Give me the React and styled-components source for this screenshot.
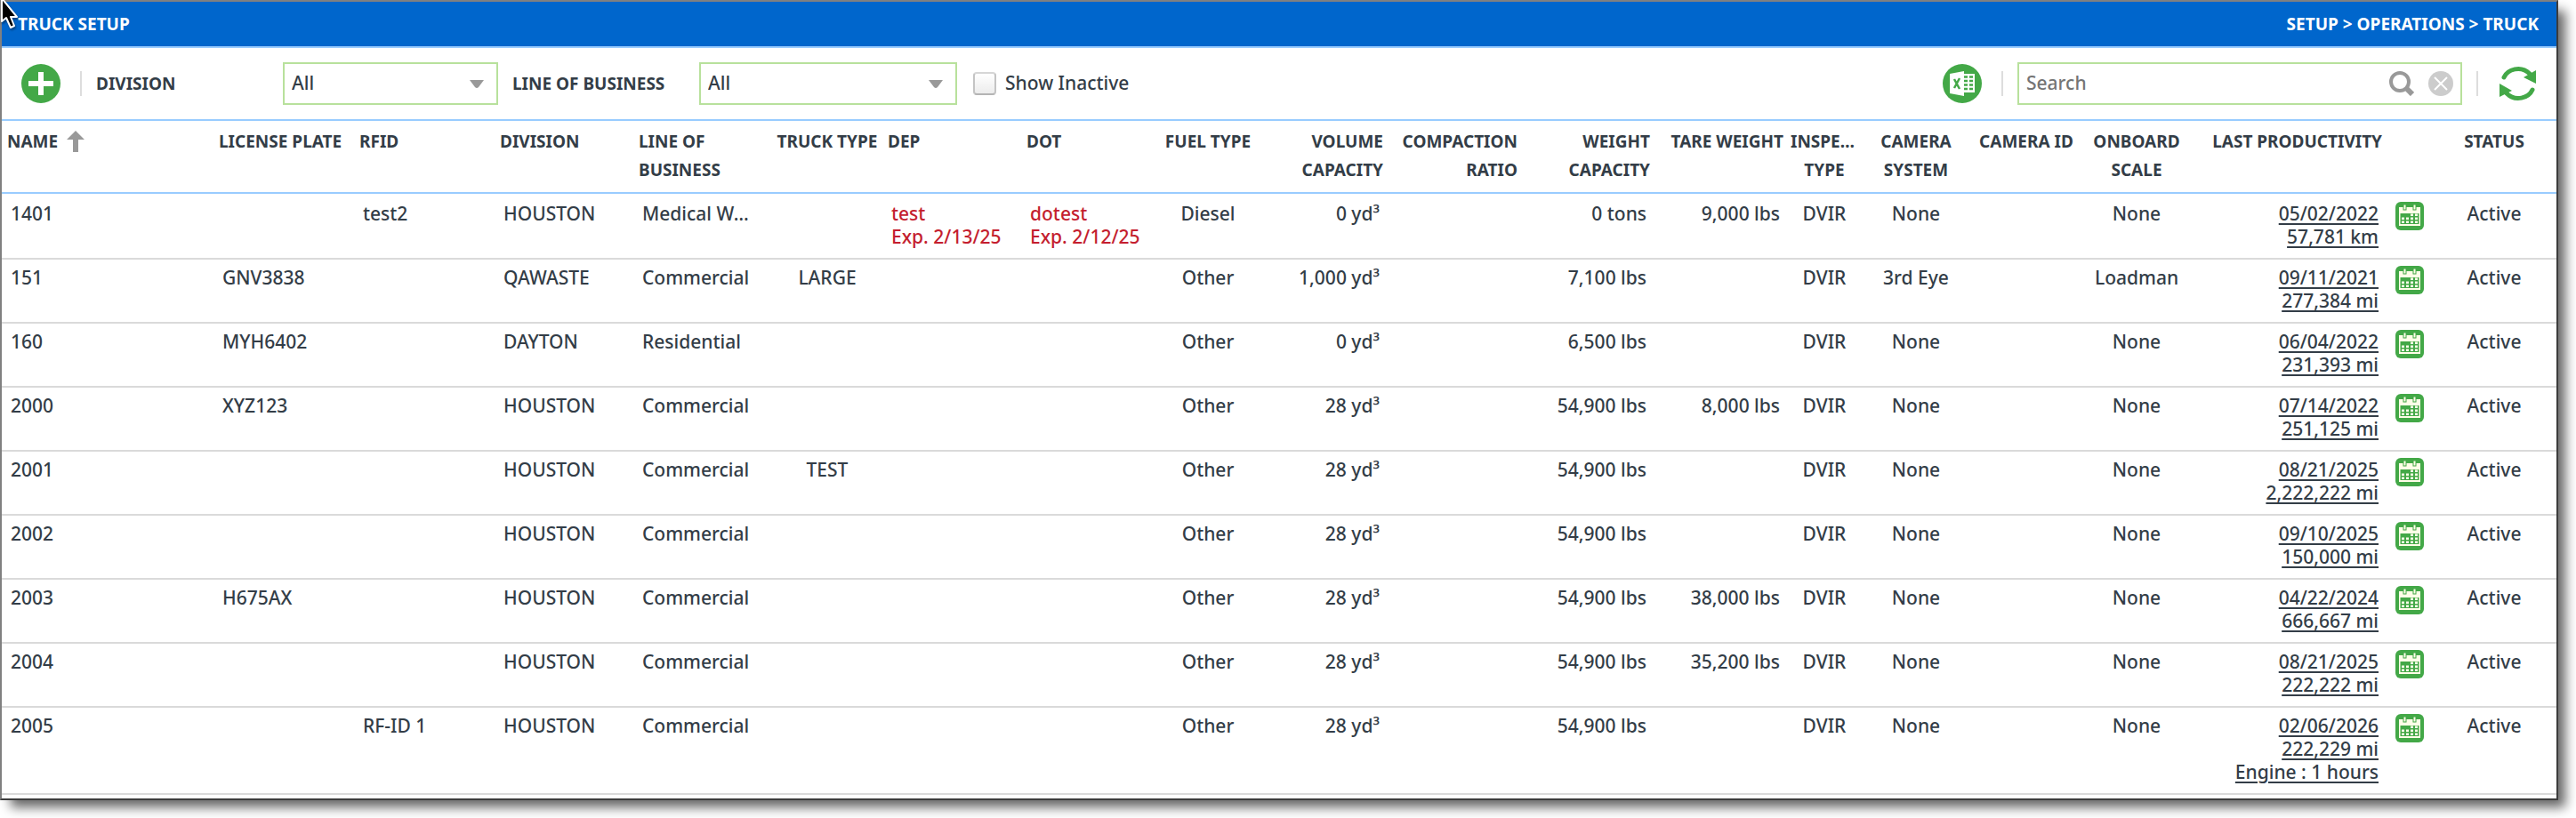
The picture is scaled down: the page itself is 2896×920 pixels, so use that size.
import { useState } from "react";
import styled, { createGlobalStyle } from "styled-components";

const GlobalStyle = createGlobalStyle`
  * {
    box-sizing: border-box;
  }

  body {
    margin: 0;
    background: #fff;
    color: #333d47;
    font-family: "Noto Sans", "Open Sans", sans-serif;
    font-size: 21px;
    font-weight: 500;
    line-height: 26px;
  }

  button, input, select {
    font: inherit;
    color: inherit;
  }
`;

const Frame = styled.main`
  position: relative;
  margin: 0 20px 20px 0;
  padding-bottom: 4px;
  border: 2px solid #808080;
  border-right-color: #3c3c3c;
  border-bottom-color: #3c3c3c;
  background: #fff;
  box-shadow: 10px 10px 12px -2px rgba(0, 0, 0, 0.6);
`;

const Pointer = styled.svg`
  position: absolute;
  top: -2px;
  left: -2px;
  filter: drop-shadow(1px 2px 1px rgba(0, 0, 0, 0.4));
`;

const TitleBar = styled.header`
  display: flex;
  align-items: center;
  justify-content: space-between;
  height: 52px;
  padding: 0 20px 0 18px;
  border-bottom: 2px solid #99ccff;
  background: #0066cc;
  color: #fff;
  font-size: 19px;
  font-weight: 700;
`;

const Title = styled.h1`
  margin: 0;
  font-size: 19px;
`;

const Toolbar = styled.div`
  display: flex;
  align-items: center;
  height: 82px;
  padding: 0 22px;
  border-bottom: 2px solid #99ccff;
`;

const IconButton = styled.button`
  display: inline-flex;
  padding: 0;
  border: 0;
  background: none;
  vertical-align: top;
  cursor: pointer;
`;

const Divider = styled.span`
  width: 2px;
  height: 28px;
  margin: 0 ${(p) => p.$after || 16}px 0 ${(p) => p.$before || 22}px;
  background: #dddddd;
`;

const FieldLabel = styled.label`
  width: 210px;
  font-size: 19px;
  font-weight: 700;
`;

const SelectBox = styled.div`
  position: relative;
  width: ${(p) => p.$width}px;
  margin-right: ${(p) => p.$gap}px;

  svg {
    position: absolute;
    top: 20px;
    right: 16px;
    pointer-events: none;
  }
`;

const Select = styled.select`
  appearance: none;
  display: block;
  width: 100%;
  height: 48px;
  padding: 0 36px 2px 8px;
  border: 2px solid #b8e19c;
  border-radius: 0;
  background: #fff;
`;

const CheckInput = styled.input`
  appearance: none;
  width: 26px;
  height: 26px;
  margin: 0 10px 0 0;
  border: 2px solid #c4c4c4;
  border-top-color: #d6d6d6;
  border-bottom-color: #b4b4b4;
  border-radius: 4px;
  background: linear-gradient(#fff, #ececec);

  &:checked {
    background: #43a847;
  }
`;

const CheckLabel = styled.label`
  padding-bottom: 2px;
`;

const RightTools = styled.div`
  display: flex;
  align-items: center;
  margin-left: auto;
`;

const SearchBox = styled.div`
  display: flex;
  align-items: center;
  gap: 16px;
  width: 500px;
  height: 48px;
  padding: 0 8px;
  border: 2px solid #b8e19c;
`;

const SearchInput = styled.input`
  flex: 1;
  min-width: 0;
  padding: 0 0 2px;
  border: 0;
  outline: 0;
  background: none;

  &::placeholder {
    color: #757575;
    opacity: 1;
  }
`;

const Table = styled.table`
  width: 100%;
  table-layout: fixed;
  border-collapse: separate;
  border-spacing: 0;
`;

const Col = styled.col`
  width: ${(p) => p.$width}px;
`;

const HeadCell = styled.th`
  height: 82px;
  padding: 7px ${(p) => (p.$align === "center" ? 2 : 6)}px 9px;
  border-bottom: 2px solid #99ccff;
  font-size: 19px;
  font-weight: 700;
  line-height: 32px;
  text-align: ${(p) => p.$align || "left"};
  vertical-align: top;
  white-space: pre;
  overflow: hidden;
  text-overflow: ellipsis;
`;

const SortButton = styled.button`
  display: inline-flex;
  align-items: center;
  gap: 10px;
  padding: 0;
  border: 0;
  background: none;
  cursor: pointer;
`;

const Row = styled.tr`
  &:first-child td {
    border-top: 2px solid #fff;
  }
`;

const cellPadding = {
  left: "7px 16px 11px 10px",
  center: "7px 0 11px",
  right: "7px 10px 11px",
};

const Cell = styled.td`
  padding: ${(p) => cellPadding[p.$align || "left"]};
  border-bottom: 2px solid #dadada;
  color: ${(p) => (p.$expired ? "#c41e2f" : "inherit")};
  text-align: ${(p) => p.$align || "left"};
  vertical-align: top;
  white-space: pre;
  overflow: hidden;
  text-overflow: ellipsis;
`;

const ProductivityLink = styled.a`
  color: inherit;
  text-decoration: underline 2px;
  text-underline-offset: 3px;
`;

const columns = [
  { key: "name", label: "NAME", width: 238 },
  { key: "plate", label: "LICENSE PLATE", width: 158 },
  { key: "rfid", label: "RFID", width: 158 },
  { key: "division", label: "DIVISION", width: 156 },
  { key: "lob", label: "LINE OF\nBUSINESS", width: 156 },
  { key: "type", label: "TRUCK TYPE", width: 124, align: "center" },
  { key: "dep", label: "DEP", width: 156, expired: true },
  { key: "dot", label: "DOT", width: 156, expired: true },
  { key: "fuel", label: "FUEL TYPE", width: 108, align: "center" },
  { key: "volume", label: "VOLUME\nCAPACITY", width: 149, align: "right" },
  { key: "ratio", label: "COMPACTION\nRATIO", width: 151, align: "right" },
  { key: "weight", label: "WEIGHT\nCAPACITY", width: 149, align: "right" },
  { key: "tare", label: "TARE WEIGHT", width: 150, align: "right" },
  { key: "inspection", label: "INSPECTION\nTYPE", width: 80, align: "center" },
  { key: "camera", label: "CAMERA\nSYSTEM", width: 126, align: "center" },
  { key: "cameraId", label: "CAMERA ID", width: 122, align: "center" },
  { key: "scale", label: "ONBOARD\nSCALE", width: 126, align: "center" },
  { key: "last", label: "LAST PRODUCTIVITY", width: 219, align: "right" },
  { key: "calendar", label: "", width: 50, align: "center" },
  { key: "status", label: "STATUS", width: 140, align: "center" },
];

const defaults = {
  division: "HOUSTON",
  lob: "Commercial",
  fuel: "Other",
  volume: "28 yd³",
  weight: "54,900 lbs",
  inspection: "DVIR",
  camera: "None",
  scale: "None",
  status: "Active",
};

const trucks = [
  {
    name: "1401",
    rfid: "test2",
    lob: "Medical Waste",
    dep: "test\nExp. 2/13/25",
    dot: "dotest\nExp. 2/12/25",
    fuel: "Diesel",
    volume: "0 yd³",
    weight: "0 tons",
    tare: "9,000 lbs",
    last: "05/02/2022\n57,781 km",
  },
  {
    name: "151",
    plate: "GNV3838",
    division: "QAWASTE",
    type: "LARGE",
    volume: "1,000 yd³",
    weight: "7,100 lbs",
    camera: "3rd Eye",
    scale: "Loadman",
    last: "09/11/2021\n277,384 mi",
  },
  {
    name: "160",
    plate: "MYH6402",
    division: "DAYTON",
    lob: "Residential",
    volume: "0 yd³",
    weight: "6,500 lbs",
    last: "06/04/2022\n231,393 mi",
  },
  { name: "2000", plate: "XYZ123", tare: "8,000 lbs", last: "07/14/2022\n251,125 mi" },
  { name: "2001", type: "TEST", last: "08/21/2025\n2,222,222 mi" },
  { name: "2002", last: "09/10/2025\n150,000 mi" },
  { name: "2003", plate: "H675AX", tare: "38,000 lbs", last: "04/22/2024\n666,667 mi" },
  { name: "2004", tare: "35,200 lbs", last: "08/21/2025\n222,222 mi" },
  { name: "2005", rfid: "RF-ID 1", last: "02/06/2026\n222,229 mi\nEngine : 1 hours" },
];

const AddIcon = () => (
  <svg width="44" height="44" viewBox="0 0 44 44">
    <circle cx="22" cy="22" r="22" fill="#43a847" />
    <path d="M22 9v26M8 22h28" stroke="#fff" strokeWidth="6" />
  </svg>
);

const ExcelIcon = () => (
  <svg width="44" height="44" viewBox="0 0 44 44">
    <circle cx="22" cy="22" r="22" fill="#43a847" />
    <path d="M8 11 24 8v28L8 33z" fill="#fff" />
    <path d="M24 11h12v21H24z" fill="#fff" />
    <path
      d="M24 14.500h4M30 14.500h4M24 19h4M30 19h4M24 23.500h4M30 23.500h4M24 28h4M30 28h4"
      stroke="#43a847"
      strokeWidth="2.500"
    />
    <path d="m13 17 6 11M19 16l-6 11" stroke="#43a847" strokeWidth="2.500" />
  </svg>
);

const DownArrow = () => (
  <svg width="16" height="9" viewBox="0 0 16 9">
    <path d="M0 0h16L10 8q-2 2-4 0z" fill="#999" />
  </svg>
);

const SearchIcon = () => (
  <svg width="28" height="28" viewBox="0 0 28 28" fill="none" stroke="#999">
    <circle cx="12" cy="12" r="10" strokeWidth="4" />
    <path d="m18 18 4 4" strokeWidth="4" />
    <path d="m20 20 6 6" strokeWidth="6" />
  </svg>
);

const ClearIcon = () => (
  <svg width="28" height="28" viewBox="0 0 28 28">
    <circle cx="14" cy="14" r="14" fill="#ccc" />
    <path d="m7 7 14 14M21 7 7 21" stroke="#fff" strokeWidth="2" />
  </svg>
);

const RefreshIcon = () => (
  <svg width="42" height="40" viewBox="0 0 42 40" fill="none" stroke="#43a847">
    <path d="M5 13C9 4 24-1 34 9" strokeWidth="5" strokeLinecap="round" />
    <path d="M37 27C33 36 18 41 8 31" strokeWidth="5" strokeLinecap="round" />
    <path d="M41 5v15L27 13z" fill="#43a847" stroke="none" />
    <path d="M0 20v15l14-7z" fill="#43a847" stroke="none" />
  </svg>
);

const SortIcon = () => (
  <svg width="20" height="24" viewBox="0 0 20 24">
    <path d="M10 0 20 10h-7v14H7V10H0z" fill="#999" />
  </svg>
);

const CalendarIcon = () => (
  <svg width="32" height="32" viewBox="0 0 32 32">
    <rect width="32" height="32" rx="6" fill="#43a847" />
    <path d="M4 6h24v21H4z" fill="#fffde8" />
    <path d="M5.500 13h21v12h-21z" fill="#43a847" />
    <path d="M8.500 2.500h4v7h-4zM19.500 2.500h4v7h-4z" fill="#43a847" />
    <path d="M9.500 3.500h2v5h-2zM20.500 3.500h2v5h-2z" fill="#fffde8" />
    <path
      d="M17 13.500h3v2.500h-3zM22 13.500h3v2.500h-3zM7 17.500h3v2.500H7zM12 17.500h3v2.500h-3zM17 17.500h3v2.500h-3zM22 17.500h3v2.500h-3zM7 21.500h3V24H7zM12 21.500h3V24h-3zM17 21.500h3V24h-3zM22 21.500h3V24h-3z"
      fill="#fffde8"
    />
  </svg>
);

const CellContent = ({ column, truck }) => {
  if (column.key === "calendar") {
    return (
      <IconButton type="button" aria-label={`Calendar for ${truck.name}`}>
        <CalendarIcon />
      </IconButton>
    );
  }
  if (column.key === "last") {
    return <ProductivityLink href="#productivity">{truck.last}</ProductivityLink>;
  }
  return truck[column.key] || null;
};

const App = () => {
  const [search, setSearch] = useState("");

  return (
    <>
      <GlobalStyle />
      <Frame>
        <TitleBar>
          <Title>TRUCK SETUP</Title>
          <nav>SETUP &gt; OPERATIONS &gt; TRUCK</nav>
        </TitleBar>

        <Toolbar>
          <IconButton type="button" aria-label="Add truck">
            <AddIcon />
          </IconButton>
          <Divider />
          <FieldLabel htmlFor="division">DIVISION</FieldLabel>
          <SelectBox $width={242} $gap={16}>
            <Select id="division">
              <option>All</option>
            </Select>
            <DownArrow />
          </SelectBox>
          <FieldLabel htmlFor="lob">LINE OF BUSINESS</FieldLabel>
          <SelectBox $width={290} $gap={18}>
            <Select id="lob">
              <option>All</option>
            </Select>
            <DownArrow />
          </SelectBox>
          <CheckInput type="checkbox" id="inactive" />
          <CheckLabel htmlFor="inactive">Show Inactive</CheckLabel>

          <RightTools>
            <IconButton type="button" aria-label="Export to Excel">
              <ExcelIcon />
            </IconButton>
            <Divider />
            <SearchBox>
              <SearchInput
                type="text"
                aria-label="Search"
                placeholder="Search"
                value={search}
                onChange={(e) => setSearch(e.target.value)}
              />
              <IconButton type="button" aria-label="Run search">
                <SearchIcon />
              </IconButton>
              <IconButton type="button" aria-label="Clear" onClick={() => setSearch("")}>
                <ClearIcon />
              </IconButton>
            </SearchBox>
            <Divider $before={16} $after={24} />
            <IconButton type="button" aria-label="Refresh">
              <RefreshIcon />
            </IconButton>
          </RightTools>
        </Toolbar>

        <Table>
          <colgroup>
            {columns.map((c) => (
              <Col key={c.key} $width={c.width} />
            ))}
          </colgroup>
          <thead>
            <tr>
              {columns.map((c) => (
                <HeadCell key={c.key} scope="col" $align={c.align}>
                  {c.key === "name" ? (
                    <SortButton type="button">
                      {c.label}
                      <SortIcon />
                    </SortButton>
                  ) : (
                    c.label
                  )}
                </HeadCell>
              ))}
            </tr>
          </thead>
          <tbody>
            {trucks.map((t) => (
              <Row key={t.name}>
                {columns.map((c) => (
                  <Cell key={c.key} $align={c.align} $expired={c.expired}>
                    <CellContent column={c} truck={{ ...defaults, ...t }} />
                  </Cell>
                ))}
              </Row>
            ))}
          </tbody>
        </Table>

        <Pointer width="22" height="34" viewBox="0 0 22 34">
          <path
            d="M2-2v26l5-4 5 11 4-2-4-10h7z"
            fill="#000"
            stroke="#fff"
            strokeWidth="2"
            strokeLinejoin="round"
          />
        </Pointer>
      </Frame>
    </>
  );
};

export default App;
